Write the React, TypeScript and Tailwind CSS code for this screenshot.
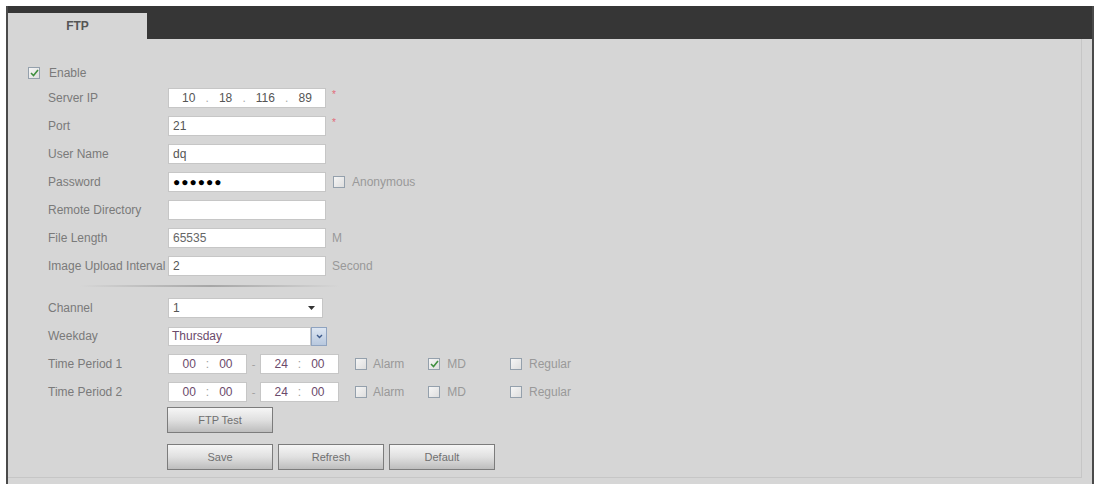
import React from "react";

const FONT = { fontFamily: '"Liberation Sans", Arial, sans-serif' };

function Check({ checked = false }: { checked?: boolean }) {
  return (
    <span className="inline-flex w-[12px] h-[12px] shrink-0 items-center justify-center border border-[#94a0ac] bg-gradient-to-br from-[#f6f6f6] to-[#dedede]">
      {checked && (
        <svg width="9" height="8" viewBox="0 0 9 8" fill="none">
          <path d="M1 4 L3.5 6.5 L8 1" stroke="#3f8f3f" strokeWidth="1.6" fill="none" />
        </svg>
      )}
    </span>
  );
}

function Label({ children }: { children: React.ReactNode }) {
  return <div className="w-[120px] shrink-0 text-[12px] text-[#7a7a7a] whitespace-nowrap">{children}</div>;
}

function TextBox({ children, className = "" }: { children?: React.ReactNode; className?: string }) {
  return (
    <div
      className={`w-[158px] h-[20px] bg-white border border-[#c6c6c6] flex items-center px-[4px] text-[12px] text-[#555] ${className}`}
    >
      {children}
    </div>
  );
}

function Row({ label, children }: { label: string; children: React.ReactNode }) {
  return (
    <div className="h-[28px] flex items-center">
      <Label>{label}</Label>
      {children}
    </div>
  );
}

function Star() {
  return <span className="ml-[6px] self-start mt-[6px] text-[10px] leading-none text-[#e26a78]">*</span>;
}

function TimeBox({ a, b }: { a: string; b: string }) {
  return (
    <div className="w-[79px] h-[20px] bg-white border border-[#c6c6c6] flex items-center justify-center gap-[10px] text-[12px] text-[#6b4a6b]">
      <span>{a}</span>
      <span className="text-[#a0a0a0]">:</span>
      <span>{b}</span>
    </div>
  );
}

function TimeRow({ label, md }: { label: string; md: boolean }) {
  return (
    <Row label={label}>
      <TimeBox a="00" b="00" />
      <span className="w-[13px] text-center text-[11px] text-[#a0a0a0]">-</span>
      <TimeBox a="24" b="00" />
      <div className="ml-[16px] flex items-center gap-[6px] text-[12px] text-[#999]">
        <Check />
        <span>Alarm</span>
      </div>
      <div className="ml-[24px] flex items-center gap-[7px] text-[12px] text-[#999]">
        <Check checked={md} />
        <span>MD</span>
      </div>
      <div className="ml-[44px] flex items-center gap-[7px] text-[12px] text-[#999]">
        <Check />
        <span>Regular</span>
      </div>
    </Row>
  );
}

function Btn({ children }: { children: React.ReactNode }) {
  return (
    <button className="w-[106px] h-[26px] border border-[#7c7c7c] bg-gradient-to-b from-[#f6f6f6] via-[#e0e0e0] to-[#bdbdbd] text-[11px] text-[#707070]">
      {children}
    </button>
  );
}

export default function App() {
  return (
    <div className="w-[1095px] h-[484px] bg-white pt-[6px] pl-[6px] overflow-hidden" style={FONT}>
      <div className="w-[1088px] h-[478px] border-x-2 border-[#4a4a4a] bg-[#d6d6d6] flex flex-col">
        {/* header bar with tab */}
        <div className="h-[33px] bg-[#363636] flex items-end shrink-0">
          <div className="w-[139px] h-[26px] bg-[#d6d6d6] flex items-center justify-center text-[12px] font-bold text-[#555]">
            FTP
          </div>
        </div>

        <div className="w-[1074px] h-[439px] border-r border-b border-[#c6c6c6] pl-[40px]">
          <div className="mt-[22px] h-[23px] flex items-center -ml-[20px] gap-[9px] text-[12px] text-[#7a7a7a]">
            <Check checked />
            <span>Enable</span>
          </div>

          <Row label="Server IP">
            <TextBox className="justify-around text-[#6b4a6b] px-[8px]">
              <span className="text-[#555]">10</span>
              <span className="text-[#aaa]">.</span>
              <span>18</span>
              <span className="text-[#aaa]">.</span>
              <span>116</span>
              <span className="text-[#aaa]">.</span>
              <span>89</span>
            </TextBox>
            <Star />
          </Row>
          <Row label="Port">
            <TextBox>21</TextBox>
            <Star />
          </Row>
          <Row label="User Name">
            <TextBox className="text-[#5a3f6a]">dq</TextBox>
          </Row>
          <Row label="Password">
            <TextBox className="text-black text-[11px] tracking-[1px]">●●●●●●</TextBox>
            <div className="ml-[7px] flex items-center gap-[7px] text-[12px] text-[#999]">
              <Check />
              <span>Anonymous</span>
            </div>
          </Row>
          <Row label="Remote Directory">
            <TextBox />
          </Row>
          <Row label="File Length">
            <TextBox className="text-[#666]">65535</TextBox>
            <span className="ml-[6px] text-[12px] text-[#999]">M</span>
          </Row>
          <Row label="Image Upload Interval">
            <TextBox>2</TextBox>
            <span className="ml-[6px] text-[12px] text-[#999]">Second</span>
          </Row>

          <div className="h-[14px] pt-[5px]">
            <div className="ml-[32px] w-[260px] h-[2px] bg-gradient-to-r from-transparent via-[#a6a6a6] to-transparent" />
          </div>

          <Row label="Channel">
            <div className="w-[155px] h-[20px] bg-white border border-[#c6c6c6] flex items-center px-[4px] text-[12px] text-[#555]">
              <span className="flex-1">1</span>
              <svg width="7" height="4" viewBox="0 0 7 4" className="mr-[3px]">
                <path d="M0 0 H7 L3.5 4 Z" fill="#333" />
              </svg>
            </div>
          </Row>
          <Row label="Weekday">
            <div className="w-[159px] h-[19px] flex">
              <div className="flex-1 bg-white border border-[#c6c6c6] flex items-center px-[3px] text-[12px] text-[#6b4a6b]">
                Thursday
              </div>
              <div className="w-[16px] bg-gradient-to-b from-[#dde6f2] to-[#b8c8de] border border-[#8fa3c0] flex items-center justify-center">
                <svg width="7" height="5" viewBox="0 0 7 5" fill="none">
                  <path d="M1 1 L3.5 3.5 L6 1" stroke="#3d5a8a" strokeWidth="1.4" />
                </svg>
              </div>
            </div>
          </Row>
          <TimeRow label="Time Period 1" md />
          <TimeRow label="Time Period 2" md={false} />

          <div className="mt-[1px] ml-[119px]">
            <Btn>FTP Test</Btn>
          </div>
          <div className="mt-[11px] ml-[119px] flex gap-[5px]">
            <Btn>Save</Btn>
            <Btn>Refresh</Btn>
            <Btn>Default</Btn>
          </div>
        </div>
      </div>
    </div>
  );
}
